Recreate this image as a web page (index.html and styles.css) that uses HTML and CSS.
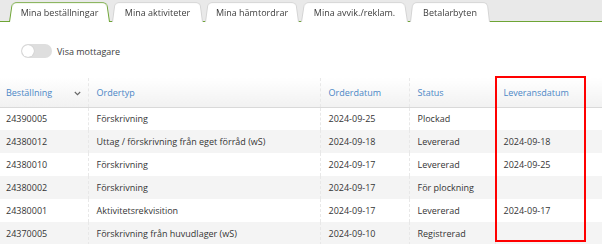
FILE: index.html
```html
<!DOCTYPE html>
<html lang="sv">
<head>
<meta charset="utf-8">
<link rel="stylesheet" href="styles.css">
</head>
<body>
<nav class="tabbar">
  <div class="tab active">Mina beställningar</div>
  <div class="tab">Mina aktiviteter</div>
  <div class="tab">Mina hämtordrar</div>
  <div class="tab">Mina avvik./reklam.</div>
  <div class="tab">Betalarbyten</div>
</nav>
<div class="toggle-row">
  <span class="toggle"><span class="knob"></span></span>
  <span class="toggle-label">Visa mottagare</span>
</div>
<div class="table-wrap">
  <table class="orders">
    <colgroup>
      <col class="c1"><col class="c2"><col class="c3"><col class="c4"><col class="c5">
    </colgroup>
    <thead>
      <tr>
        <th><span class="th-inner">Beställning<svg class="chev" width="7" height="5" viewBox="0 0 7 5"><path d="M0.8 1 L3.5 3.7 L6.2 1" fill="none" stroke="#666" stroke-width="1.1"/></svg></span></th>
        <th>Ordertyp</th>
        <th>Orderdatum</th>
        <th>Status</th>
        <th>Leveransdatum</th>
      </tr>
    </thead>
    <tbody>
      <tr><td>24390005</td><td>Förskrivning</td><td>2024-09-25</td><td>Plockad</td><td></td></tr>
      <tr><td>24380012</td><td>Uttag / förskrivning från eget förråd (wS)</td><td>2024-09-18</td><td>Levererad</td><td>2024-09-18</td></tr>
      <tr><td>24380010</td><td>Förskrivning</td><td>2024-09-17</td><td>Levererad</td><td>2024-09-25</td></tr>
      <tr><td>24380002</td><td>Förskrivning</td><td>2024-09-17</td><td>För plockning</td><td></td></tr>
      <tr><td>24380001</td><td>Aktivitetsrekvisition</td><td>2024-09-17</td><td>Levererad</td><td>2024-09-17</td></tr>
      <tr><td>24370005</td><td>Förskrivning från huvudlager (wS)</td><td>2024-09-10</td><td>Registrerad</td><td></td></tr>
    </tbody>
  </table>
  <div class="highlight"></div>
</div>
</body>
</html>
```

FILE: styles.css
```css
* { box-sizing: border-box; }
html, body { margin: 0; padding: 0; background: #fff; }
body {
  font-family: "Open Sans", "Noto Sans", sans-serif;
  font-size: 9px;
  color: #353535;
  width: 602px;
  height: 244px;
  overflow: hidden;
}

.tabbar {
  display: flex;
  align-items: flex-end;
  gap: 2px;
  height: 22px;
  padding-left: 9px;
  background: #e9e9e9;
  border-bottom: 1px solid #6ea535;
}
.tab {
  position: relative;
  height: 21px;
  margin-bottom: -1px;
  display: flex;
  align-items: center;
  justify-content: center;
  padding-top: 1px;
  color: #3d3d3d;
  white-space: nowrap;
  z-index: 1;
}
.tab::before {
  content: "";
  position: absolute;
  inset: 0;
  background: #fff;
  border: 1px solid #d4d4d4;
  border-bottom: none;
  border-radius: 5px 5px 0 0;
  transform: perspective(24px) rotateX(4deg);
  transform-origin: bottom;
  z-index: -1;
}
.tab.active { z-index: 2; }
.tab.active::before {
  border-color: #6ea535;
  border-width: 1.5px;
}
.tab:nth-child(1) { width: 101px; }
.tab:nth-child(2) { width: 91px; }
.tab:nth-child(3) { width: 94px; }
.tab:nth-child(4) { width: 107px; }
.tab:nth-child(5) { width: 80px; }

.toggle-row {
  display: flex;
  align-items: center;
  gap: 5px;
  margin-top: 22px;
  padding-left: 21px;
  height: 14px;
}
.toggle {
  position: relative;
  width: 31px;
  height: 14px;
  border-radius: 7px;
  background: #dedede;
  display: flex;
  align-items: center;
  padding-left: 1px;
}
.knob {
  width: 12px;
  height: 12px;
  border-radius: 50%;
  background: #fff;
  box-shadow: 0 0 1px rgba(0,0,0,0.25);
}
.toggle-label { color: #3d3d3d; }

.table-wrap {
  position: relative;
  margin-top: 20px;
}
.orders {
  width: 602px;
  border-collapse: collapse;
  table-layout: fixed;
}
.c1 { width: 88px; }
.c2 { width: 232px; }
.c3 { width: 89px; }
.c4 { width: 86px; }
.c5 { width: 107px; }

.orders th {
  height: 29px;
  padding: 1px 0 0 8px;
  text-align: left;
  font-weight: normal;
  color: #4b87c6;
  background: linear-gradient(#ffffff, #f1f1f1);
  border-bottom: 1px solid #d9d9d9;
  white-space: nowrap;
}
.orders th:first-child { padding-left: 6px; }
.th-inner {
  display: flex;
  align-items: center;
  justify-content: space-between;
  padding-right: 7px;
}
.chev { margin-top: 2px; }

.orders td {
  height: 23px;
  padding: 0 0 0 8px;
  white-space: nowrap;
}
.orders td:first-child { padding-left: 6px; }
.orders th + th,
.orders td + td {
  border-left: 1px dashed #e8e8e8;
}
.orders tbody tr:nth-child(even) td { background: #f4f4f4; }

.highlight {
  position: absolute;
  left: 495px;
  top: -2px;
  width: 91px;
  height: 166px;
  border: 2px solid #ff0000;
  pointer-events: none;
}
```
